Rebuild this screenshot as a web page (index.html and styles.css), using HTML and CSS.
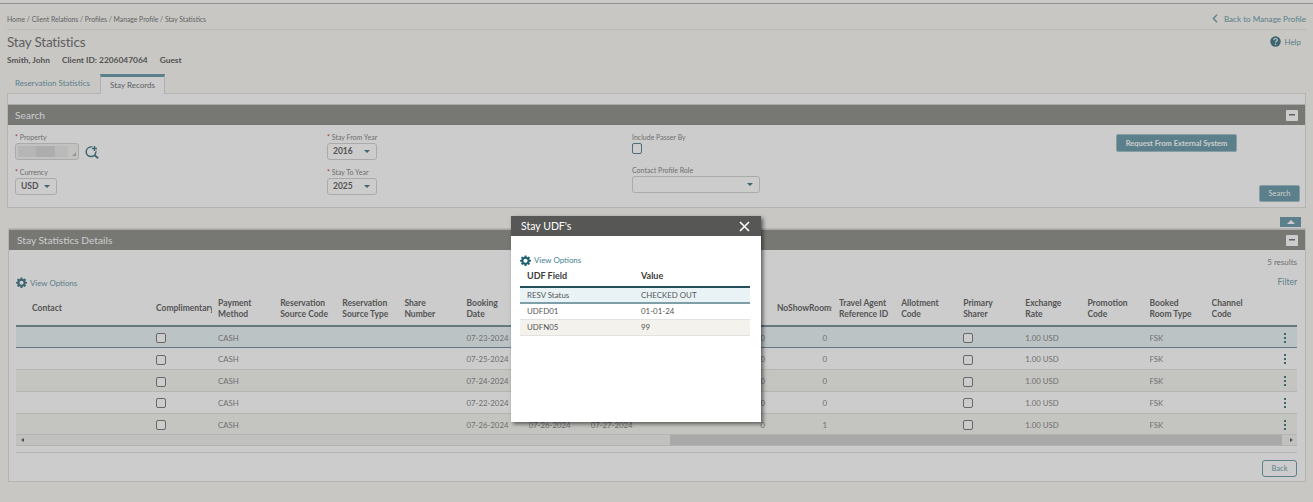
FILE: index.html
```html
<!DOCTYPE html>
<html lang="en">
<head>
    <meta charset="UTF-8">
    <title>Stay Statistics</title>
    <link rel="stylesheet" href="styles.css">
</head>
<body>
    <div class="top-strip"></div>
    <div class="breadcrumb-row">
        <span class="breadcrumb">Home / Client Relations / Profiles / Manage Profile / Stay Statistics</span>
        <a class="back-link"><svg width="6" height="9" viewBox="0 0 6 9"><path d="M5 .8 1.400 4.500 5 8.200" fill="none" stroke="#72a1ae" stroke-width="1.400"/></svg>Back to Manage Profile</a>
    </div>
    <div class="title-row">
        <h1>Stay Statistics</h1>
        <a class="help"><svg width="11" height="11" viewBox="0 0 11 11"><circle cx="5.500" cy="5.500" r="5.200" fill="#4d7f8c"/><path d="M3.800 4.200c0-2.200 3.500-2.200 3.500-.2 0 1.300-1.700 1.200-1.700 2.600" fill="none" stroke="#fff" stroke-width="1.100"/><circle cx="5.600" cy="8.300" r=".8" fill="#fff"/></svg>Help</a>
    </div>
    <div class="client-line"><span>Smith, John</span><span>Client ID: 2206047064</span><span>Guest</span></div>

    <div class="tabs">
        <div class="tab">Reservation Statistics</div>
        <div class="tab tab-active">Stay Records</div>
    </div>

    <div class="tab-body">
        <div class="panel search-panel">
            <div class="panel-header">Search<span class="collapse"></span></div>
            <div class="search-grid">
                <div class="search-col">
                    <div class="field">
                        <label><i>*</i> Property</label>
                        <div class="property-row">
                            <div class="property-input"><span class="masked"></span></div>
                            <svg width="14" height="14" viewBox="0 0 14 14"><circle cx="6" cy="6.800" r="4.800" fill="none" stroke="#4d7f8c" stroke-width="1.500"/><path d="m9.500 10.300 3.700 3" stroke="#4d7f8c" stroke-width="1.800"/><path d="M9.500 .5v6M6.500 3.500h6" stroke="#fff" stroke-width="3"/><path d="M9.500 1v5M7 3.500h5" stroke="#4d7f8c" stroke-width="1.400"/></svg>
                        </div>
                    </div>
                    <div class="field">
                        <label><i>*</i> Currency</label>
                        <div class="select select-currency">USD</div>
                    </div>
                </div>
                <div class="search-col">
                    <div class="field">
                        <label><i>*</i> Stay From Year</label>
                        <div class="select select-year">2016</div>
                    </div>
                    <div class="field">
                        <label><i>*</i> Stay To Year</label>
                        <div class="select select-year">2025</div>
                    </div>
                </div>
                <div class="search-col">
                    <div class="field">
                        <label>Include Passer By</label>
                        <span class="check check-passer"></span>
                    </div>
                    <div class="field field-role">
                        <label>Contact Profile Role</label>
                        <div class="select select-role"></div>
                    </div>
                </div>
                <div class="search-actions">
                    <button class="btn btn-request">Request From External System</button>
                    <button class="btn btn-search">Search</button>
                </div>
            </div>
        </div>

        <div class="up-row"><button class="up-btn"><span></span></button></div>

        <div class="panel details-panel">
            <div class="panel-header">Stay Statistics Details<span class="collapse"></span></div>
            <div class="results">5 results</div>
            <div class="options-row">
                <a class="view-options"><svg class="gear" width="11" height="11" viewBox="0 0 24 24"><path fill="#4d7f8c" fill-rule="evenodd" d="M10 1h4l.6 3.100 1.900.8L19.100 3 22 5.900l-1.900 2.600.8 1.900L24 11v3l-3.100.6-.8 1.900 1.900 2.600-2.900 2.900-2.600-1.900-1.900.8L14 24h-4l-.6-3.100-1.900-.8-2.600 1.900L2 19.100l1.900-2.600-.8-1.900L0 14v-3l3.100-.6.8-1.900L2 5.900 4.900 3l2.600 1.900 1.900-.8zm2 7a4.500 4.500 0 1 0 0 9 4.500 4.500 0 0 0 0-9z"/></svg>View Options</a>
                <a class="filter">Filter</a>
            </div>
            <table class="records">
                <thead>
                    <tr>
                        <th class="col-contact">Contact</th>
                        <th class="nowrap"><span class="clip">Complimentary</span></th>
                        <th>Payment Method</th>
                        <th>Reservation Source Code</th>
                        <th>Reservation Source Type</th>
                        <th>Share Number</th>
                        <th>Booking<br>Date</th>
                        <th></th><th></th><th></th><th></th>
                        <th class="nowrap"><span class="clip">NoShowRooms</span></th>
                        <th>Travel Agent Reference ID</th>
                        <th>Allotment Code</th>
                        <th>Primary Sharer</th>
                        <th>Exchange Rate</th>
                        <th>Promotion Code</th>
                        <th>Booked<br>Room Type</th>
                        <th>Channel<br>Code</th>
                        <th></th>
                    </tr>
                </thead>
                <tbody id="rows"></tbody>
            </table>
            <div class="scrollbar">
                <span class="arrow arrow-left"></span>
                <span class="scroll-track"><span class="scroll-thumb"></span></span>
                <span class="arrow arrow-right"></span>
            </div>
            <div class="panel-footer"><button class="btn-back">Back</button></div>
        </div>
    </div>

    <div class="overlay"></div>

    <div class="dialog">
        <div class="dialog-header">Stay UDF's
            <svg width="11" height="11" viewBox="0 0 11 11"><path d="m1 1 9 9M10 1l-9 9" stroke="#fff" stroke-width="1.600"/></svg>
        </div>
        <div class="dialog-body">
            <a class="view-options dialog-options"><svg class="gear" width="11" height="11" viewBox="0 0 24 24"><path fill="#1f6273" fill-rule="evenodd" d="M10 1h4l.6 3.100 1.900.8L19.100 3 22 5.900l-1.900 2.600.8 1.900L24 11v3l-3.100.6-.8 1.900 1.900 2.600-2.900 2.900-2.600-1.900-1.900.8L14 24h-4l-.6-3.100-1.900-.8-2.600 1.900L2 19.100l1.900-2.600-.8-1.900L0 14v-3l3.100-.6.8-1.900L2 5.900 4.900 3l2.600 1.900 1.900-.8zm2 7a4.500 4.500 0 1 0 0 9 4.500 4.500 0 0 0 0-9z"/></svg>View Options</a>
            <table class="udf">
                <thead><tr><th>UDF Field</th><th>Value</th></tr></thead>
                <tbody>
                    <tr class="udf-selected"><td>RESV Status</td><td>CHECKED OUT</td></tr>
                    <tr><td>UDFD01</td><td>01-01-24</td></tr>
                    <tr class="udf-alt"><td>UDFN05</td><td>99</td></tr>
                </tbody>
            </table>
        </div>
    </div>

    <script>
        // Rows of the records table
        const records = [
            { booking: '07-23-2024', noShow: 0 },
            { booking: '07-25-2024', noShow: 0 },
            { booking: '07-24-2024', noShow: 0 },
            { booking: '07-22-2024', noShow: 0 },
            { booking: '07-26-2024', arrival: '07-26-2024', departure: '07-27-2024', noShow: 1 }
        ];

        document.getElementById('rows').innerHTML = records.map((r, i) => `
            <tr class="${i === 0 ? 'row-selected' : i % 2 === 0 ? 'row-alt' : ''}">
                <td></td>
                <td><span class="check"></span></td>
                <td>CASH</td><td></td><td></td><td></td>
                <td>${r.booking}</td>
                <td>${r.arrival || ''}</td>
                <td>${r.departure || ''}</td>
                <td></td>
                <td class="num">0</td>
                <td class="num num-show">${r.noShow}</td>
                <td></td><td></td>
                <td><span class="check"></span></td>
                <td>1.00 USD</td>
                <td></td>
                <td>FSK</td>
                <td></td>
                <td class="kebab"><span></span><span></span><span></span></td>
            </tr>`).join('');
    </script>
</body>
</html>
```

FILE: styles.css
```css
* {
    box-sizing: border-box;
}
html, body {
    height: 502px;
    overflow: hidden;
}
body {
    margin: 0;
    position: relative;
    background-color: #faf9f5;
    font-family: Lato, "Open Sans", sans-serif;
    font-size: 8.500px;
    color: #777;
}
.top-strip {
    height: 4px;
    background-color: #fdfdfb;
    border-bottom: 1px solid #b4b4b4;
}
.breadcrumb-row {
    height: 26px;
    margin: 0 7px;
    padding-top: 4px;
    display: flex;
    justify-content: space-between;
    align-items: center;
    border-bottom: 1px solid #e6e6e4;
}
.breadcrumb {
    color: #7c7c7c;
    font-size: 6.800px;
}
.back-link {
    color: #72a1ae;
    font-size: 8.100px;
    display: flex;
    align-items: center;
    gap: 6px;
}
.title-row {
    margin: 0 12px 0 7px;
    height: 24px;
    padding-bottom: 1px;
    display: flex;
    justify-content: space-between;
    align-items: center;
}
h1 {
    margin: 0;
    font-size: 13.500px;
    letter-spacing: -0.2px;
    font-weight: 400;
    color: #777;
}
.help {
    display: flex;
    align-items: center;
    gap: 3px;
    font-size: 8px;
    color: #72a1ae;
}
.client-line {
    margin: 0 7px;
    height: 14px;
    padding-top: 1px;
    display: flex;
    gap: 12px;
    font-size: 8.400px;
    font-weight: 700;
    color: #6a6a6a;
}
.tabs {
    margin: 5px 7px 0 8px;
    height: 20px;
    display: flex;
}
.tab {
    width: 92px;
    padding: 5px 3px 0 0;
    text-align: center;
    font-size: 8px;
    color: #72a1ae;
}
.tab-active {
    width: 65px;
    background-color: #fff;
    color: #777;
    border: 1px solid #ddd;
    border-top: 3px solid #72a1ae;
    border-bottom: none;
    padding: 3px 0 0 0;
    position: relative;
    top: 1px;
}
.tab-body {
    margin: 0 7px;
}
.panel {
    background-color: #fff;
    border: 1px solid #e2e2e0;
}
.search-panel {
    padding-top: 10px;
    height: 115px;
}
.panel-header {
    height: 21px;
    padding: 0 7px;
    display: flex;
    justify-content: space-between;
    align-items: center;
    font-size: 10.200px;
    color: #fff;
    background-color: #959592;
    border-top: 1px solid #d5d5d5;
}
.collapse {
    width: 12px;
    height: 11px;
    background: linear-gradient(#777, #777) center / 6px 1.500px no-repeat, #fff;
    border-radius: 1px;
}
.search-grid {
    display: grid;
    grid-template-columns: 312px 305px 484px 1fr;
    padding: 8px 5px 0 7px;
    height: 83px;
}
.search-col {
    display: flex;
    flex-direction: column;
}
.field {
    height: 35px;
}
.field label {
    display: block;
    height: 8px;
    line-height: 8px;
    font-size: 7px;
    color: #8c8c8c;
    margin-bottom: 2px;
}
.field i {
    color: #e03a3a;
    font-style: normal;
}
.field-role {
    margin-top: -2px;
}
.property-row {
    display: flex;
    align-items: center;
    gap: 6px;
}
.property-input {
    position: relative;
    width: 64px;
    height: 17px;
    border: 1px solid #d5d5d5;
    border-radius: 3px;
    background-color: #f3f3f1;
    padding: 2px 10px 2px 2px;
}
.property-input::after {
    content: "";
    position: absolute;
    right: 2px;
    bottom: 3px;
    border: 2px solid transparent;
    border-right-color: #bdbdbd;
    border-bottom-color: #bdbdbd;
}
.masked {
    display: block;
    height: 100%;
    background: linear-gradient(90deg, #e4e4e4 0 36%, #d9d9d9 36% 74%, #e9e9e9 74%);
}
.select {
    position: relative;
    height: 17px;
    border: 1px solid #d5d5d5;
    border-radius: 3px;
    background-color: #fff;
    padding: 0 5px;
    line-height: 15px;
    font-size: 8.500px;
    font-weight: 700;
    color: #6a6a6a;
}
.select::after {
    content: "";
    position: absolute;
    right: 6px;
    top: 6px;
    border: 3px solid transparent;
    border-top: 3px solid #4d7f8c;
}
.select-currency {
    width: 42px;
}
.select-year {
    width: 50px;
}
.select-role {
    width: 128px;
}
.check {
    display: inline-block;
    width: 10px;
    height: 10px;
    border: 1px solid #828282;
    border-radius: 2px;
    background-color: #fff;
    vertical-align: middle;
}
.check-passer {
    display: block;
    height: 11px;
    margin-top: 2px;
    border-color: #5f8b97;
}
.search-actions {
    display: flex;
    flex-direction: column;
    align-items: flex-start;
}
.btn {
    border: 1px solid #a9c6ce;
    border-radius: 2px;
    background-color: #72a1ae;
    color: #fff;
    font-family: inherit;
    font-size: 7.500px;
    padding: 0;
}
.btn-request {
    width: 121px;
    height: 18px;
    margin-top: 1px;
    font-weight: 700;
}
.btn-search {
    width: 41px;
    height: 17px;
    margin: 33px 0 0 143px;
}
.up-row {
    height: 20px;
    display: flex;
    justify-content: flex-end;
    padding: 9px 5px 0 0;
}
.up-btn {
    width: 21px;
    height: 10px;
    border: none;
    padding: 0;
    background-color: #72a1ae;
    display: flex;
    align-items: center;
    justify-content: center;
}
.up-btn span {
    border: 4px solid transparent;
    border-top: none;
    border-bottom: 4px solid #fff;
}
.details-panel {
    height: 254px;
    margin-left: 1px;
}
.details-panel .panel-header {
    padding-left: 8px;
}
.results {
    height: 16px;
    padding: 7px 8px 0 0;
    line-height: 10px;
    text-align: right;
    font-size: 8px;
    color: #8c8c8c;
}
.options-row {
    height: 30px;
    padding: 11px 8px 0 7px;
    display: flex;
    justify-content: space-between;
    align-items: flex-start;
    color: #72a1ae;
}
.view-options {
    display: flex;
    align-items: center;
    gap: 3px;
    font-size: 7.900px;
    color: #72a1ae;
}
.records {
    margin-left: 7px;
    width: 1281px;
    table-layout: fixed;
    border-collapse: collapse;
}
.records th {
    width: 62.100px;
    height: 30px;
    padding: 0 8px 4px 0;
    text-align: left;
    vertical-align: middle;
    overflow: hidden;
    font-size: 8.500px;
    line-height: 11px;
    font-weight: 700;
    color: #6a6a6a;
    border-bottom: 2px solid #7e96a0;
}
.records th.col-contact {
    width: 140px;
    padding-left: 16px;
}
.records th:last-child {
    width: auto;
}
.records th.nowrap {
    padding-right: 0;
    white-space: nowrap;
}
.clip {
    display: block;
    width: 55.500px;
    overflow: hidden;
}
.records td {
    height: 21.800px;
    padding: 1px 0 0 0;
    white-space: nowrap;
    overflow: hidden;
    font-size: 7.800px;
    color: #8c8c8c;
    border-bottom: 1px solid #e2e2e0;
}
.row-selected td {
    background-color: #ecf4f6;
    border-bottom-color: #7e96a0;
}
.row-alt td {
    background-color: #f6f5f1;
}
.records td.num {
    text-align: right;
    padding-right: 12px;
}
.kebab span {
    display: block;
    width: 2px;
    height: 2px;
    margin: 2px 11px 2px auto;
    background-color: #4d7f8c;
}
.scrollbar {
    margin: 0 8px 0 7px;
    height: 11px;
    display: flex;
    align-items: center;
    background-color: #f2f2f0;
    border-bottom: 1px solid #e2e2e0;
}
.arrow {
    width: 12px;
    display: flex;
    justify-content: center;
}
.arrow-left::before {
    content: "";
    border: 2px solid transparent;
    border-right: 3px solid #666;
    border-left: none;
}
.arrow-right::before {
    content: "";
    border: 2px solid transparent;
    border-left: 3px solid #666;
    border-right: none;
}
.scroll-track {
    flex: 1;
    height: 100%;
}
.scroll-thumb {
    display: block;
    width: 612px;
    height: 100%;
    margin-left: 642px;
    background-color: #d4d4d4;
}
.panel-footer {
    margin: 6px 8px 0 7px;
    padding-top: 7px;
    border-top: 1px solid #e2e2e0;
    display: flex;
    justify-content: flex-end;
}
.btn-back {
    width: 35px;
    height: 17px;
    padding: 0;
    border: 1px solid #72a1ae;
    border-radius: 3px;
    background-color: #fff;
    color: #72a1ae;
    font-family: inherit;
    font-size: 7.500px;
}
.overlay {
    position: absolute;
    inset: 0;
    background-color: rgba(0, 0, 0, 0.2);
}
.dialog {
    position: absolute;
    left: 511px;
    top: 216px;
    width: 250px;
    height: 206px;
    background-color: #fff;
    box-shadow: 2px 2px 4px rgba(0, 0, 0, 0.55);
}
.dialog-header {
    height: 20px;
    padding: 0 11px 0 10px;
    display: flex;
    justify-content: space-between;
    align-items: center;
    font-size: 10.500px;
    color: #fff;
    background-color: #575755;
}
.dialog-body {
    padding: 18px 11px 0 9px;
}
.dialog-options {
    height: 12px;
    margin-bottom: 3px;
    color: #3f7f90;
}
.udf {
    width: 230px;
    table-layout: fixed;
    border-collapse: collapse;
    font-size: 7.900px;
    color: #555;
}
.udf th {
    height: 18px;
    padding: 0 0 4px 7px;
    text-align: left;
    font-size: 9px;
    font-weight: 700;
    color: #3c3c3c;
    border-bottom: 2px solid #24505c;
}
.udf th:first-child {
    width: 114px;
}
.udf td {
    height: 16px;
    padding: 0 0 0 7px;
    border-bottom: 1px solid #e2e2e0;
}
.udf-selected td {
    background-color: #e9f3f6;
    border-bottom: 2px solid #7e9ea8;
}
.udf-alt td {
    background-color: #f3f2ed;
}
```
